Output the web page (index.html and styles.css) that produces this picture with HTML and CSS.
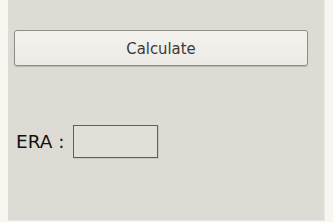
FILE: index.html
```html
<!DOCTYPE html>
<html>
<head>
<meta charset="utf-8">
<link rel="stylesheet" href="styles.css">
</head>
<body>
<div class="panel">
  <button class="calc">Calculate</button>
  <div class="row">
    <span class="label">ERA :</span>
    <input class="field" type="text">
  </div>
</div>
</body>
</html>
```
FILE: styles.css
```css
html, body {
  margin: 0;
  padding: 0;
  background: #f8f6f1;
  height: 222px;
  overflow: hidden;
}
body {
  padding: 0 8px;
}
.panel {
  background: #dedbd5;
  height: 221px;
  box-sizing: border-box;
  padding: 30px 16px 0 6px;
  border-right: 1px solid #ebe9e4;
  border-bottom: 1px solid #ebe9e4;
}
.calc {
  display: block;
  width: 100%;
  height: 36px;
  box-sizing: border-box;
  border: 1px solid #8f8d88;
  border-radius: 3px;
  background: linear-gradient(#f3f2ed, #ecebe5);
  box-shadow: 0 1px 1px rgba(0,0,0,0.18);
  font-family: "DejaVu Sans Condensed", "DejaVu Sans", sans-serif;
  font-size: 16.5px;
  color: #3a3a3a;
  padding: 0;
}
.row {
  display: flex;
  align-items: center;
  gap: 8px;
  margin-top: 59px;
  margin-left: 2px;
}
.label {
  font-family: "DejaVu Sans", sans-serif;
  font-size: 18.5px;
  color: #111;
}
.field {
  width: 85px;
  height: 33px;
  box-sizing: border-box;
  margin: 0;
  border: 1px solid #5e5e5c;
  box-shadow: 1px 1px 0 #c9c6c0;
  background: #e2dfd9;
  padding: 0;
}
```
